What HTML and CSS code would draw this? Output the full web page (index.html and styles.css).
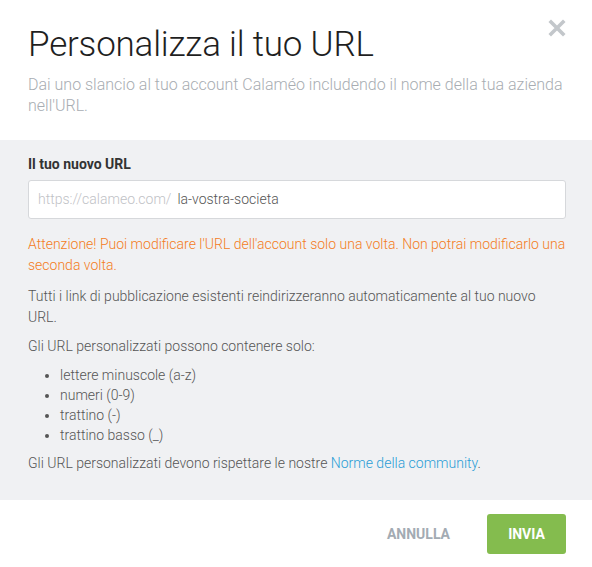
FILE: index.html
```html
<!DOCTYPE html>
<html lang="it">
<head>
<meta charset="utf-8">
<title>Personalizza il tuo URL</title>
<link rel="stylesheet" href="styles.css">
</head>
<body>
<div class="dialog">
  <header class="head">
    <h1 class="title">Personalizza il tuo URL</h1>
    <p class="subtitle">Dai uno slancio al tuo account Calaméo includendo il nome della tua azienda nell'URL.</p>
    <button class="close" aria-label="Chiudi">
      <svg width="18" height="18" viewBox="0 0 18 18"><path d="M3 3 L15 15 M15 3 L3 15" stroke="#c3c7cb" stroke-width="3.6" stroke-linecap="square" fill="none"/></svg>
    </button>
  </header>
  <section class="body">
    <label class="label">Il tuo nuovo URL</label>
    <div class="field">
      <span class="prefix">https://calameo.com/</span>
      <span class="value">la-vostra-societa</span>
    </div>
    <p class="warn">Attenzione! Puoi modificare l'URL dell'account solo una volta. Non potrai modificarlo una seconda volta.</p>
    <p class="text">Tutti i link di pubblicazione esistenti reindirizzeranno automaticamente al tuo nuovo URL.</p>
    <p class="text text-tight">Gli URL personalizzati possono contenere solo:</p>
    <ul class="list">
      <li>lettere minuscole (a-z)</li>
      <li>numeri (0-9)</li>
      <li>trattino (-)</li>
      <li>trattino basso (_)</li>
    </ul>
    <p class="text">Gli URL personalizzati devono rispettare le nostre <a class="link" href="#">Norme della community</a>.</p>
  </section>
  <footer class="foot">
    <button class="btn btn-cancel">Annulla</button>
    <button class="btn btn-send">Invia</button>
  </footer>
</div>
</body>
</html>
```
FILE: styles.css
```css
* { box-sizing: border-box; }
html, body { margin: 0; padding: 0; background: #fff; }
body { font-family: Roboto, "Liberation Sans", sans-serif; color: #555; }

.dialog { width: 592px; height: 567px; display: flex; flex-direction: column; }

.head { position: relative; padding: 22px 26px 0 28px; height: 140px; }
.title { margin: 0; font-weight: 300; font-size: 35px; line-height: 46px; color: #1f1f1f; letter-spacing: -0.2px; }
.subtitle { margin: 6px 0 0; font-weight: 300; font-size: 16px; line-height: 21px; color: #a8adb2; }
.close { position: absolute; top: 19px; right: 26px; border: 0; background: none; padding: 0; width: 18px; height: 18px; cursor: pointer; }
.close svg { display: block; }

.body { background: #f0f1f3; padding: 15px 26px 0 28px; height: 360px; font-size: 14px; line-height: 21px; }
.label { display: block; font-weight: 700; font-size: 14px; line-height: 18px; color: #333; }
.field { margin-top: 7px; height: 39px; background: #fff; border: 1px solid #d6d8db; border-radius: 3px; display: flex; align-items: center; padding: 0 9px; font-size: 14px; }
.prefix { color: #bfc2c6; font-weight: 300; }
.value { color: #555; margin-left: 6px; font-weight: 300; }

.warn { margin: 15px 0 0; color: #f47c22; font-weight: 300; }
.text { margin: 10px 0 0; font-weight: 300; color: #555; }
.text-tight { margin-top: 8px; }
.list { margin: 8px 0 0; padding: 0 0 0 32px; line-height: 20px; font-weight: 300; }
.list + .text { margin-top: 8px; }
.link { color: #2a9dd6; text-decoration: none; }

.foot { flex: 1; display: flex; justify-content: flex-end; align-items: center; padding: 1px 26px 0 28px; gap: 37px; }
.btn { font-family: Roboto, "Liberation Sans", sans-serif; font-weight: 700; font-size: 14px; text-transform: uppercase; border: 0; border-radius: 3px; cursor: pointer; height: 40px; }
.btn-cancel { background: none; color: #a3abb3; padding: 0; }
.btn-send { background: #84bc4e; color: #fff; width: 79px; }
```
